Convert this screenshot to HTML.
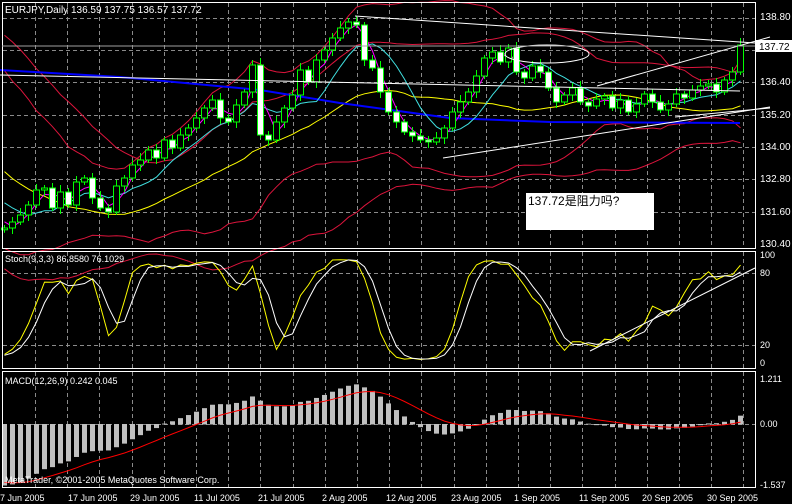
<!DOCTYPE html>
<html><head><meta charset="utf-8"><style>
html,body{margin:0;padding:0;background:#000;}
svg{display:block;}
text{font-family:"Liberation Sans","Noto Sans CJK SC",sans-serif;font-size:10px;fill:#fff;}
</style></head><body>
<svg id="c" width="792" height="504" viewBox="0 0 792 504" xmlns="http://www.w3.org/2000/svg">
<rect width="792" height="504" fill="#000"/>
<g id="grid" stroke="#8a8a8a" stroke-dasharray="4,3" stroke-width="1"></g>
<g id="ind"></g>
<g id="cand"></g>
<g stroke="#fff" fill="none" stroke-width="1">
<path d="M2.5 2.5H755.5V248.5H2.5Z"/>
<path d="M2.5 251.5H755.5V368.5H2.5Z"/>
<path d="M2.5 371.5H755.5V487.5H2.5Z"/>
</g>
<g stroke="#fff" stroke-width="1" fill="none">
<line x1="355" y1="16" x2="755" y2="43"/>
<line x1="443" y1="158" x2="770" y2="107"/>
<line x1="597" y1="86" x2="770" y2="37"/>
<line x1="675" y1="117" x2="770" y2="108"/>
<line x1="0" y1="75" x2="740" y2="91"/>
<line x1="590" y1="351" x2="755" y2="268"/>
<ellipse cx="547" cy="54" rx="42" ry="9"/>
</g>
<line x1="2" y1="46" x2="755" y2="46" stroke="#a0a0a0"/>
<rect x="526" y="193" width="128" height="37" fill="#fff"/>
<text x="528" y="205" style="fill:#000;font-size:12px">137.72是阻力吗?</text>
<text x="5" y="13">EURJPY,Daily  136.59 137.75 136.57 137.72</text>
<text x="5" y="262" style="font-size:9px">Stoch(9,3,3) 86.8580 76.1029</text>
<text x="5" y="384" style="font-size:9px">MACD(12,26,9) 0.242 0.045</text>
<text x="5" y="483" style="font-size:9px">MetaTrader, ©2001-2005 MetaQuotes Software Corp.</text>
<g id="axis"></g>
<rect x="756" y="40" width="36" height="12" fill="#fff"/>
<text x="759" y="50" style="fill:#000">137.72</text>
<g id="dates"></g>
</svg>
<script>
(function(){
var NS="http://www.w3.org/2000/svg";
function el(p,t,a){var e=document.createElementNS(NS,t);for(var k in a)e.setAttribute(k,a[k]);document.getElementById(p).appendChild(e);return e;}
var vx=[];for(var gx=35;gx<755;gx+=32.2)vx.push(Math.round(gx)+.5);
vx.forEach(function(x){el('grid','line',{x1:x,y1:3,x2:x,y2:248});el('grid','line',{x1:x,y1:252,x2:x,y2:368});el('grid','line',{x1:x,y1:372,x2:x,y2:487});});
[18,50,82,115,147,179,212].forEach(function(y){el('grid','line',{x1:3,y1:y+.5,x2:755,y2:y+.5});});
[273,345].forEach(function(y){el('grid','line',{x1:3,y1:y+.5,x2:755,y2:y+.5});});
el('grid','line',{x1:3,y1:424.5,x2:755,y2:424.5});
[["138.80",20],["136.40",85],["135.20",118],["134.00",150],["132.80",182],["131.60",215],["130.40",247]].forEach(function(a){var t=el('axis','text',{x:760,y:a[1]});t.textContent=a[0];});
[["100",258],["80",276],["20",348],["0",366],["1.211",382],["0.00",427],["-1.537",488]].forEach(function(a){var t=el('axis','text',{x:760,y:a[1],style:"font-size:9px"});t.textContent=a[0];});
[["7 Jun 2005",0],["17 Jun 2005",68],["29 Jun 2005",130],["11 Jul 2005",194],["21 Jul 2005",258],["2 Aug 2005",322],["12 Aug 2005",386],["23 Aug 2005",451],["1 Sep 2005",514],["11 Sep 2005",579],["20 Sep 2005",642],["30 Sep 2005",707]].forEach(function(a){var t=el('dates','text',{x:a[1],y:501,style:"font-size:9px"});t.textContent=a[0];});
var C=[228,222,215,205,190,188,208,192,205,182,178,198,208,212,186,178,165,160,150,158,140,148,135,128,118,108,100,118,122,105,92,65,135,140,122,108,95,70,82,60,50,38,28,22,25,60,68,92,112,122,132,136,140,142,138,128,112,102,92,76,58,52,62,48,72,78,66,72,88,102,95,88,102,106,99,96,108,100,112,104,94,102,110,104,94,98,90,86,84,92,80,72,45];
var PRE=[];for(var q=0;q<40;q++)PRE.push(-60+q*7.2+((q*5)%7-3)*3);
var F=PRE.concat(C),OFF=PRE.length;
var X=function(i){return 4+(i-OFF)*8;};
var H=[],L=[];
for(var i=0;i<F.length;i++){
 var o=i?F[i-1]:F[0]+5,c=F[i];var bt=Math.min(o,c),bb=Math.max(o,c);
 var h=bt-3-(i*7%5),l=bb+3+(i*3%6);H.push(h);L.push(l);
 if(i<OFF)continue;
 var x=X(i);
 el('cand','line',{x1:x+.5,y1:h,x2:x+.5,y2:l,stroke:'#00ff00'});
 el('cand','rect',{x:x-2.5,y:bt,width:6,height:Math.max(1,bb-bt),fill:c>o?'#fff':'#000',stroke:'#00ff00'});
}
function sma(a,n){return a.map(function(v,i){var s=0,k=0;for(var j=Math.max(0,i-n+1);j<=i;j++){s+=a[j];k++;}return s/k;});}
function sd(a,n){var m=sma(a,n);return a.map(function(v,i){var s=0,k=0;for(var j=Math.max(0,i-n+1);j<=i;j++){s+=(a[j]-m[i])*(a[j]-m[i]);k++;}return Math.sqrt(s/k);});}
function poly(g,arr,col){var p=[];arr.forEach(function(v,i){if(i>=OFF)p.push((X(i)+.5)+','+v.toFixed(1));});el(g,'polyline',{points:p.join(' '),fill:'none',stroke:col,'stroke-width':1});}
var m5=sma(F,3),m10=sma(F,8),m20=sma(F,20),s20=sd(F,20),m40=sma(F,30),s40=sd(F,30);
poly('ind',m20.map(function(v,i){return v-2*s20[i]-4;}),'#dc143c');
poly('ind',m20.map(function(v,i){return v+2*s20[i]+4;}),'#dc143c');
poly('ind',m40.map(function(v,i){return v-1.5*s40[i]+5;}),'#dc143c');
poly('ind',m40.map(function(v,i){return v+2*s40[i]+20;}),'#dc143c');
poly('ind',m20.map(function(v){return v+12;}),'#ffff00');
el('ind','polyline',{points:'0,70 120,77 260,90 340,103 450,118 550,122 740,123',fill:'none',stroke:'#0000ff','stroke-width':2});
poly('ind',m10,'#40e0e0');
poly('ind',m5,'#ff00ff');
var K=[];for(var i2=0;i2<F.length;i2++){var hh=1e9,ll=-1e9;for(var j=Math.max(0,i2-8);j<=i2;j++){hh=Math.min(hh,H[j]);ll=Math.max(ll,L[j]);}K.push(ll==hh?50:(ll-F[i2])/(ll-hh)*100);}
var Ks=sma(K,3),Ds=sma(Ks,3);
poly('ind',Ks.map(function(v){return 363-v*1.08;}),'#ffff00');
poly('ind',Ds.map(function(v){return 363-v*1.08;}),'#fff');
var P=F.map(function(y){return -y/27;});
function ema(a,n){var k=2/(n+1),r=[],e=a[0];a.forEach(function(v){e=v*k+e*(1-k);r.push(e);});return r;}
var e12=ema(P,12),e26=ema(P,26),M=e12.map(function(v,i){return v-e26[i];});
var S=ema(M,9);
var mx=0,mn=0;M.forEach(function(v,i){if(i>=OFF){mx=Math.max(mx,v);mn=Math.min(mn,v);}});
var sc=Math.min(46/mx,61/(-mn||1));
M.forEach(function(v,i){if(i<OFF)return;var y=424-v*sc;el('ind','rect',{x:X(i)-2,y:Math.min(y,424),width:5,height:Math.abs(y-424)+.5,fill:'#c0c0c0'});});
poly('ind',S.map(function(v){return 424-v*sc;}),'#ff0000');
})();
</script>
</body></html>
